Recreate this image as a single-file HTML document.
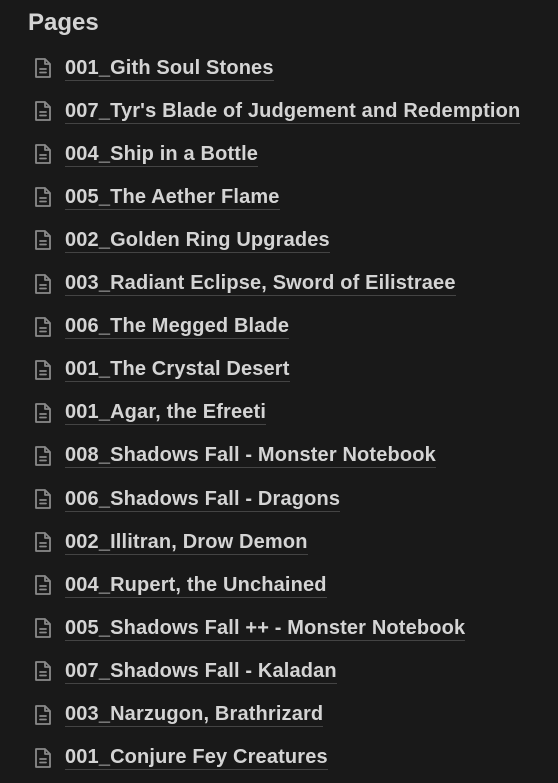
<!DOCTYPE html>
<html><head><style>
body{margin:0;background:#191919;width:558px;height:783px;overflow:hidden;font-family:"Liberation Sans",sans-serif;}
h1{position:absolute;left:28px;top:9px;margin:0;font-size:24px;font-weight:bold;color:#d4d4d4;}
.r{position:absolute;left:32px;height:30px;display:flex;align-items:center;}
.r svg{width:22px;height:24px;margin-right:11px;}
.r span{font-size:20px;font-weight:bold;color:#d4d4d4;border-bottom:1px solid #444;line-height:24px;letter-spacing:0.15px;}
</style></head><body>
<h1>Pages</h1>
<div id="l"></div>
<script>
var t=["001_Gith Soul Stones","007_Tyr's Blade of Judgement and Redemption","004_Ship in a Bottle","005_The Aether Flame","002_Golden Ring Upgrades","003_Radiant Eclipse, Sword of Eilistraee","006_The Megged Blade","001_The Crystal Desert","001_Agar, the Efreeti","008_Shadows Fall - Monster Notebook","006_Shadows Fall - Dragons","002_Illitran, Drow Demon","004_Rupert, the Unchained","005_Shadows Fall ++ - Monster Notebook","007_Shadows Fall - Kaladan","003_Narzugon, Brathrizard","001_Conjure Fey Creatures"];
var h="";t.forEach(function(s,i){h+='<div class="r" style="top:'+(53+i*43.1)+'px"><svg viewBox="0 0 22 24" fill="none" stroke="#8a8a8a" stroke-width="1.8" stroke-linejoin="round"><path d="M4 3h9l5 5v13H4z"/><path d="M13 3v5h5"/><path d="M8 13h6M8 16.5h6" stroke-linecap="round"/></svg><span>'+s+'</span></div>';});
document.getElementById("l").innerHTML=h;
</script>
</body></html>
